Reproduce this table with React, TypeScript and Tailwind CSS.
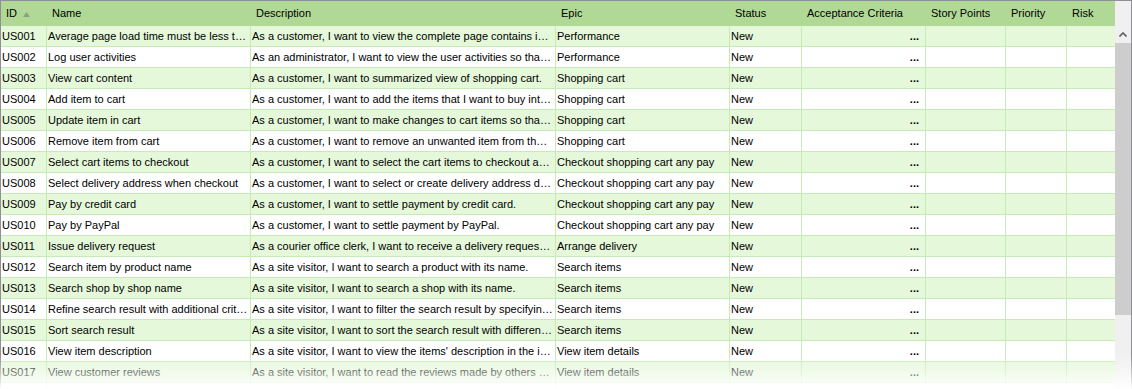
import React from 'react'

type Story = {
  id: string
  name: string
  description: string
  epic: string
}

const stories: Story[] = [
  { id: 'US001', name: 'Average page load time must be less than 3 seconds', description: 'As a customer, I want to view the complete page contains information within 3 seconds.', epic: 'Performance' },
  { id: 'US002', name: 'Log user activities', description: 'As an administrator, I want to view the user activities so that I can trace problems.', epic: 'Performance' },
  { id: 'US003', name: 'View cart content', description: 'As a customer, I want to summarized view of shopping cart.', epic: 'Shopping cart' },
  { id: 'US004', name: 'Add item to cart', description: 'As a customer, I want to add the items that I want to buy into the cart.', epic: 'Shopping cart' },
  { id: 'US005', name: 'Update item in cart', description: 'As a customer, I want to make changes to cart items so that I can adjust quantity.', epic: 'Shopping cart' },
  { id: 'US006', name: 'Remove item from cart', description: 'As a customer, I want to remove an unwanted item from the cart.', epic: 'Shopping cart' },
  { id: 'US007', name: 'Select cart items to checkout', description: 'As a customer, I want to select the cart items to checkout and pay.', epic: 'Checkout shopping cart any pay' },
  { id: 'US008', name: 'Select delivery address when checkout', description: 'As a customer, I want to select or create delivery address during checkout.', epic: 'Checkout shopping cart any pay' },
  { id: 'US009', name: 'Pay by credit card', description: 'As a customer, I want to settle payment by credit card.', epic: 'Checkout shopping cart any pay' },
  { id: 'US010', name: 'Pay by PayPal', description: 'As a customer, I want to settle payment by PayPal.', epic: 'Checkout shopping cart any pay' },
  { id: 'US011', name: 'Issue delivery request', description: 'As a courier office clerk, I want to receive a delivery request from the shop.', epic: 'Arrange delivery' },
  { id: 'US012', name: 'Search item by product name', description: 'As a site visitor, I want to search a product with its name.', epic: 'Search items' },
  { id: 'US013', name: 'Search shop by shop name', description: 'As a site visitor, I want to search a shop with its name.', epic: 'Search items' },
  { id: 'US014', name: 'Refine search result with additional criteria', description: 'As a site visitor, I want to filter the search result by specifying more criteria.', epic: 'Search items' },
  { id: 'US015', name: 'Sort search result', description: 'As a site visitor, I want to sort the search result with different orders.', epic: 'Search items' },
  { id: 'US016', name: 'View item description', description: "As a site visitor, I want to view the items' description in the item page.", epic: 'View item details' },
  { id: 'US017', name: 'View customer reviews', description: 'As a site visitor, I want to read the reviews made by others before buying.', epic: 'View item details' },
  { id: 'US018', name: 'Write item review', description: 'As a customer, I want to write a review for the item I bought.', epic: 'View item details' },
]

// column widths include the 1px right grid line
const cell = 'shrink-0 truncate border-r border-[#c6ebb6] h-full leading-[20px]'

function SortArrow() {
  return (
    <svg width="7" height="5" viewBox="0 0 7 5" className="ml-[6px] mt-[1px]">
      <polygon points="3.5,0 7,5 0,5" fill="#8e9e88" />
    </svg>
  )
}

function Header() {
  const th = 'shrink-0 h-full flex items-center pl-[5px]'
  return (
    <div className="flex shrink-0 h-[25px] bg-[#b1d996] text-black">
      <div className={`${th} w-[46px]`}>
        ID
        <SortArrow />
      </div>
      <div className={`${th} w-[204px]`}>Name</div>
      <div className={`${th} w-[305px]`}>Description</div>
      <div className={`${th} w-[174px]`}>Epic</div>
      <div className={`${th} w-[72px]`}>Status</div>
      <div className={`${th} w-[124px]`}>Acceptance Criteria</div>
      <div className={`${th} w-[80px]`}>Story Points</div>
      <div className={`${th} w-[61px]`}>Priority</div>
      <div className={`${th} w-[48px]`}>Risk</div>
    </div>
  )
}

function Row({ s, i }: { s: Story; i: number }) {
  const bg = i % 2 === 0 ? 'bg-[#e5f8da]' : 'bg-white'
  return (
    <div className={`flex shrink-0 h-[21px] border-b border-[#c6ebb6] ${bg}`}>
      <div className={`${cell} w-[46px] pl-[1px]`}>{s.id}</div>
      <div className={`${cell} w-[204px] pl-[1px] pr-[2px]`}>{s.name}</div>
      <div className={`${cell} w-[305px] pl-[1px] pr-[2px]`}>{s.description}</div>
      <div className={`${cell} w-[174px] pl-[1px]`}>{s.epic}</div>
      <div className={`${cell} w-[72px] pl-[1px]`}>New</div>
      <div className={`${cell} w-[124px] pr-[6px] text-right font-bold`}>...</div>
      <div className={`${cell} w-[80px]`} />
      <div className={`${cell} w-[61px]`} />
      <div className="shrink-0 w-[48px] h-full" />
    </div>
  )
}

function Scrollbar() {
  return (
    <div className="w-[16px] shrink-0 bg-[#f0f0f0] flex flex-col">
      <div className="h-[25px] shrink-0" />
      <div className="h-[17px] shrink-0 flex items-center justify-center">
        <svg width="8" height="5" viewBox="0 0 8 5">
          <polyline points="0.5,4.5 4,1 7.5,4.5" fill="none" stroke="#606060" strokeWidth="1.6" />
        </svg>
      </div>
      <div className="h-[272px] shrink-0 bg-[#cdcdcd]" />
      <div className="flex-1" />
    </div>
  )
}

export default function App() {
  return (
    <div
      className="relative w-[1132px] h-[389px] overflow-hidden bg-white text-[11px] text-black"
      style={{ fontFamily: '"Liberation Sans", Arial, sans-serif' }}
    >
      <div className="flex h-full border-t border-l border-r border-[#8f8f96]">
        <div className="w-[1114px] shrink-0 flex flex-col">
          <Header />
          {stories.map((s, i) => (
            <Row key={s.id} s={s} i={i} />
          ))}
        </div>
        <Scrollbar />
      </div>
      <div className="pointer-events-none absolute left-0 right-0 bottom-0 h-[34px] bg-linear-to-b from-white/0 via-white/45 to-white" />
    </div>
  )
}
